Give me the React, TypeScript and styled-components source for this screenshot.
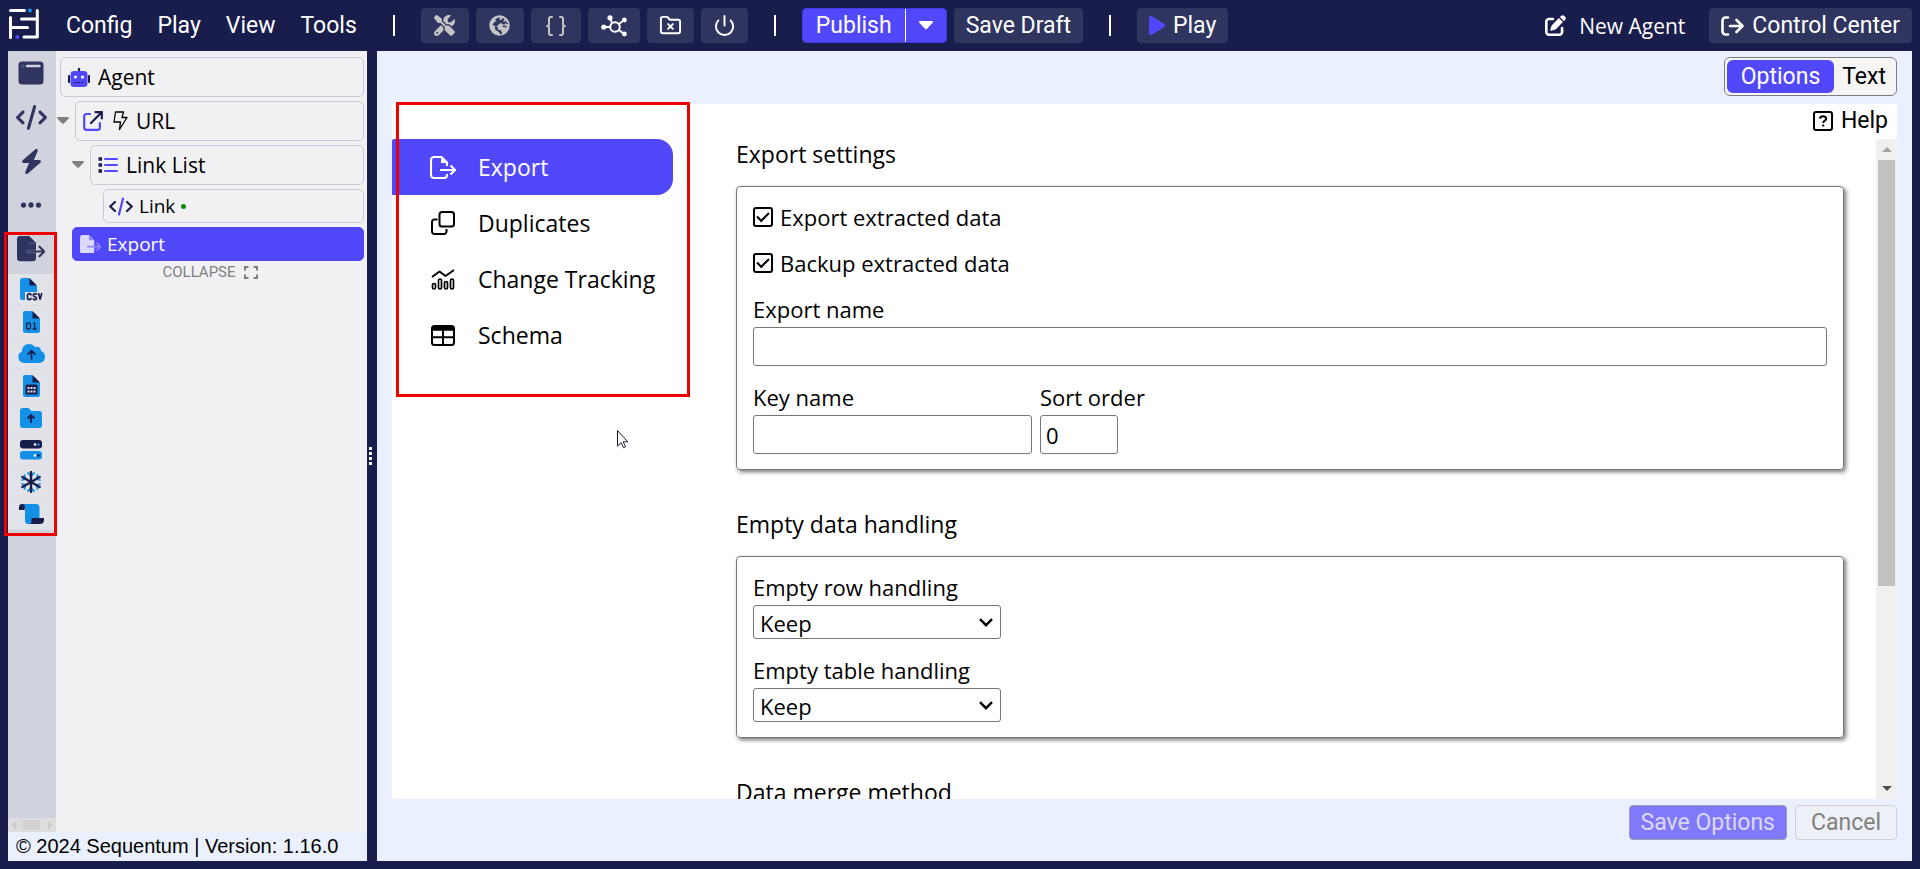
import React, { useState } from "react";
import styled, { createGlobalStyle, css } from "styled-components";
import { FaScrewdriverWrench, FaCode, FaBolt, FaEllipsis, FaPenToSquare } from "react-icons/fa6";
import { Braces, FolderX, Power } from "lucide-react";

const color = {
  navy: "#191d4c",
  slate: "#303560",
  purple: "#5248fb",
  sky: "#1490e6",
  pale: "#eaf0fd",
  panel: "#f1f1f4",
  rail: "#d0d3dd",
  line: "#c9cad6",
};
const roboto = `Roboto, "Liberation Sans", sans-serif`;
const openSans = `"Open Sans", "Noto Sans", sans-serif`;

const GlobalStyle = createGlobalStyle`
  * { box-sizing: border-box; }
  body { margin: 0; background: ${color.navy}; color: #000; font: 22px/30px ${openSans}; }
  button, input, select { font: inherit; color: inherit; margin: 0; }
  svg { display: block; flex: none; }
`;

const Page = styled.div`
  position: relative;
  display: flex;
  flex-direction: column;
  height: 100vh;
  min-height: 640px;
  padding: 0 8px 8px;
`;

/* ---------- top bar ---------- */
const TopBar = styled.header`
  display: flex;
  align-items: center;
  height: 51px;
  flex: none;
  color: #fff;
  font: 23px/32px ${roboto};
`;
const Home = styled.a`
  padding-bottom: 4px;
`;
const Menu = styled.nav`
  display: flex;
  gap: 25px;
  margin: 0 10px 0 26px;
`;
const MenuItem = styled.button`
  padding: 0;
  border: 0;
  background: none;
  cursor: pointer;
`;
const Divider = styled.span`
  width: 2px;
  height: 21px;
  margin: 0 26px;
  background: #fff;
`;
const ToolGroup = styled.div`
  display: flex;
  gap: 7px;
`;
const BarButton = styled.button<{ $width?: number; $dim?: boolean }>`
  display: flex;
  align-items: center;
  justify-content: center;
  gap: 8px;
  height: 35px;
  width: ${(p) => (p.$width ? `${p.$width}px` : "auto")};
  padding: 0 ${(p) => (p.$width ? 0 : 12)}px;
  border: 0;
  border-radius: 4px;
  background: ${color.slate};
  color: ${(p) => (p.$dim ? "#c4c4c4" : "#fff")};
  white-space: nowrap;
`;
const Split = styled.div`
  display: flex;
  height: 35px;
  border: 1px solid #4339e0;
  border-radius: 4px;
  overflow: hidden;
`;
const SplitPart = styled.button`
  display: flex;
  align-items: center;
  padding: 0 13px;
  border: 0;
  background: ${color.purple};
  & + & { border-left: 1px solid #fff; }
`;
const BarEnd = styled.div`
  display: flex;
  align-items: center;
  gap: 24px;
  margin-left: auto;
`;
const BarLink = styled.a`
  display: flex;
  align-items: center;
  gap: 13px;
  color: #fff;
  text-decoration: none;
  font: 21px/30px ${openSans};
`;

/* ---------- body ---------- */
const Body = styled.div`
  display: flex;
  flex: 1;
  min-height: 0;
`;
const Sidebar = styled.aside`
  display: flex;
  flex-direction: column;
  width: 359px;
  flex: none;
  background: ${color.panel};
`;
const SidebarMain = styled.div`
  display: flex;
  flex: 1;
  min-height: 0;
`;
const RailColumn = styled.div`
  display: flex;
  flex-direction: column;
  width: 48px;
  background: #dddddf;
`;
const Rail = styled.nav`
  display: flex;
  flex-direction: column;
  gap: 3px;
  flex: 1;
  background: ${color.rail};
  border-bottom-right-radius: 3px;
`;
const RailButton = styled.button<{ $sub?: boolean }>`
  display: flex;
  align-items: center;
  justify-content: center;
  width: 46px;
  height: ${(p) => (p.$sub ? 32 : 44)}px;
  padding: 0;
  border: 0;
  border-bottom: ${(p) => (p.$sub ? "1px solid #dcdde4" : "0")};
  background: ${(p) => (p.$sub ? "#e2e3e9" : "none")};
  color: ${color.slate};
`;
const RailScroll = styled.div`
  display: flex;
  align-items: center;
  justify-content: space-around;
  height: 14px;
`;
const RailThumb = styled.span`
  width: 17px;
  height: 10px;
  background: #d2d2d3;
`;
const Tree = styled.ul`
  flex: 1;
  display: flex;
  flex-direction: column;
  gap: 4px;
  margin: 0;
  padding: 6px 3px 0 0;
  list-style: none;
`;
const TreeRow = styled.li<{ $indent: number }>`
  display: flex;
  align-items: center;
  padding-left: ${(p) => p.$indent}px;
`;
const Twisty = styled.button`
  display: flex;
  align-items: center;
  width: 18px;
  height: 18px;
  padding: 0;
  border: 0;
  background: none;
  color: #808080;
`;
const Node = styled.button<{ $small?: boolean; $selected?: boolean }>`
  display: flex;
  align-items: center;
  gap: ${(p) => (p.$small ? 6 : 8)}px;
  flex: 1;
  height: ${(p) => (p.$small ? 34 : 40)}px;
  padding: 0 ${(p) => (p.$small ? 5 : 7)}px;
  border: 1px solid ${color.line};
  border-radius: 5px;
  background: none;
  font-size: ${(p) => (p.$small ? 19 : 21)}px;
  line-height: 28px;
  ${(p) =>
    p.$selected &&
    css`
      padding: 0 7px;
      border-color: ${color.purple};
      background: ${color.purple};
      color: #fff;
    `}
`;
const NodeIcons = styled.span`
  display: flex;
  align-items: center;
  gap: 10px;
`;
const Dot = styled.span`
  width: 5px;
  height: 5px;
  border-radius: 50%;
  background: #0a8a0a;
`;
const Collapse = styled.button`
  display: flex;
  align-items: center;
  gap: 8px;
  align-self: center;
  padding: 0;
  border: 0;
  background: none;
  color: #808080;
  font: 15px/14px ${roboto};
`;
const Version = styled.footer`
  height: 29px;
  padding-left: 8px;
  background: ${color.pale};
  font: 20px/28px "Liberation Sans", Arial, sans-serif;
  white-space: nowrap;
`;
const Splitter = styled.div`
  display: flex;
  flex-direction: column;
  justify-content: center;
  align-items: flex-start;
  gap: 2px;
  width: 10px;
  flex: none;
  padding-left: 2px;
`;
const Grip = styled.span`
  width: 3px;
  height: 3px;
  background: #fff;
`;

const Workspace = styled.main`
  display: flex;
  flex-direction: column;
  flex: 1;
  min-width: 0;
  padding: 0 15px;
  background: ${color.pale};
`;
const ModeRow = styled.div`
  display: flex;
  justify-content: flex-end;
  padding: 6px 0 8px;
`;
const ModeToggle = styled.div`
  display: flex;
  height: 39px;
  padding: 2px;
  border: 1px solid #7c7c80;
  border-radius: 6px;
  background: #f5f5f5;
`;
const ModeButton = styled.button<{ $active: boolean }>`
  padding: 0 ${(p) => (p.$active ? 14 : 8)}px;
  border: 0;
  border-radius: 6px;
  background: ${(p) => (p.$active ? color.purple : "none")};
  color: ${(p) => (p.$active ? "#fff" : "#000")};
  font: 23px/32px ${roboto};
`;
const Panel = styled.section`
  display: flex;
  flex-direction: column;
  flex: 1;
  min-height: 0;
  background: #fff;
  border-radius: 0 0 3px 3px;
`;
const HelpRow = styled.div`
  display: flex;
  justify-content: flex-end;
  padding: 1px 9px 2px;
`;
const HelpLink = styled.a`
  display: flex;
  align-items: center;
  gap: 8px;
  color: #000;
  text-decoration: none;
  font: 23px/32px ${roboto};
`;
const PanelBody = styled.div`
  display: flex;
  flex: 1;
  min-height: 0;
`;
const SideNav = styled.nav`
  width: 281px;
  flex: none;
`;
const SideLink = styled.a<{ $active?: boolean }>`
  display: grid;
  grid-template-columns: 26px 1fr;
  column-gap: 22px;
  align-items: center;
  height: 56px;
  padding-left: 38px;
  border-radius: 2px 16px 16px 0;
  background: ${(p) => (p.$active ? color.purple : "none")};
  color: ${(p) => (p.$active ? "#fff" : "#000")};
  text-decoration: none;
  font-size: 23px;
  & > svg { justify-self: center; }
`;
const Form = styled.form`
  flex: 1;
  min-width: 0;
  padding: 0 32px 0 63px;
  overflow: hidden;
`;
const Section = styled.section`
  & + & { margin-top: 39px; }
`;
const Heading = styled.h2`
  margin: 0 0 17px;
  font-size: 23px;
  font-weight: 400;
  line-height: 30px;
`;
const Card = styled.div`
  display: flex;
  flex-direction: column;
  gap: 16px;
  padding: 15px 16px;
  border: 1px solid #777;
  border-radius: 4px;
  box-shadow: 2px 2px 4px #777;
`;
const CheckRow = styled.label`
  display: flex;
  align-items: center;
  gap: 7px;
`;
const CheckBox = styled.input`
  appearance: none;
  display: grid;
  place-items: center;
  width: 20px;
  height: 20px;
  border: 2px solid #000;
  border-radius: 3px;
  &:checked::after {
    content: "";
    width: 10px;
    height: 5px;
    margin-bottom: 3px;
    border: solid #000;
    border-width: 0 0 2px 2px;
    transform: rotate(-45deg);
  }
`;
const Field = styled.label<{ $width?: number }>`
  display: flex;
  flex-direction: column;
  gap: 3px;
  width: ${(p) => (p.$width ? `${p.$width}px` : "auto")};
  white-space: nowrap;
`;
const FieldRow = styled.div`
  display: flex;
  gap: 8px;
`;
const Input = styled.input`
  width: 100%;
  height: 39px;
  padding: 0 5px;
  border: 1px solid #767676;
  border-radius: 3px;
  background: #fff;
`;
const SelectBox = styled.span`
  display: grid;
  align-items: center;
  & > * { grid-area: 1 / 1; }
  & > svg { justify-self: end; margin-right: 8px; pointer-events: none; }
`;
const SelectInput = styled.select`
  appearance: none;
  width: 100%;
  height: 34px;
  padding: 2px 6px 0;
  border: 1px solid #767676;
  border-radius: 3px;
  background: #fff;
`;
const ScrollTrack = styled.div`
  display: flex;
  flex-direction: column;
  align-items: center;
  width: 21px;
  flex: none;
  background: #f0f0f0;
`;
const ScrollArrow = styled.span`
  display: grid;
  place-items: center;
  height: 21px;
`;
const ScrollLane = styled.div`
  flex: 1;
  width: 17px;
`;
const ScrollThumb = styled.div`
  height: 69%;
  background: #c1c1c1;
`;
const Actions = styled.div`
  display: flex;
  justify-content: flex-end;
  gap: 8px;
  padding: 6px 0 21px;
`;
const ActionButton = styled.button<{ $primary?: boolean }>`
  height: 35px;
  padding: 0 ${(p) => (p.$primary ? 11 : 15)}px;
  border: 1px solid ${(p) => (p.$primary ? "#9d9dab" : "#d0d0d4")};
  border-radius: 4px;
  background: ${(p) => (p.$primary ? "#8079fb" : "#edf0f7")};
  color: ${(p) => (p.$primary ? "#dcdaf0" : "#808080")};
  font: 23px/32px ${roboto};
`;
const Outline = styled.div`
  position: absolute;
  border: 3px solid #ee0000;
  pointer-events: none;
`;
const RailOutline = styled(Outline)`
  left: 4px;
  top: 232px;
  width: 53px;
  height: 304px;
`;
const NavOutline = styled(Outline)`
  left: 396px;
  top: 102px;
  width: 294px;
  height: 295px;
`;
const Pointer = styled.svg`
  position: absolute;
  left: 616px;
  top: 429px;
`;

/* ---------- drawings ---------- */
const Logo = () => (
  <svg width="32" height="32" viewBox="0 0 32 32" fill="none" stroke="#fff" strokeWidth="3" strokeLinecap="round" strokeLinejoin="round">
    <path d="M2.500 2.500H16.500M2.500 9.500V29.500M2.500 19.500H19.500M29.300 2.500V29H16M29.300 11H13.500" />
    <circle cx="22" cy="2.500" r="2" fill={color.sky} stroke="none" />
    <circle cx="9.300" cy="29" r="2" fill={color.purple} stroke="none" />
  </svg>
);
const Caret = ({ size = 14 }: { size?: number }) => (
  <svg width={size} height={size * 0.6} viewBox="0 0 14 8.400" fill="currentColor">
    <path d="M1 0h12a1 1 0 0 1 .7 1.700L8 7.700a1.400 1.400 0 0 1-2 0L.3 1.700A1 1 0 0 1 1 0z" />
  </svg>
);
const Chevron = () => (
  <svg width="14" height="9" viewBox="0 0 14 9" fill="none" stroke="#000" strokeWidth="2.400">
    <path d="M1 1.200l6 6 6-6" />
  </svg>
);
const Globe = () => (
  <svg width="21" height="21" viewBox="0 0 21 21">
    <circle cx="10.500" cy="10.500" r="10.200" fill="currentColor" />
    <g fill={color.slate}>
      <path d="M6 4.500L9.500 2.500l2 .3L9.800 4.600l2.200.5 2-2 1.600 1.200L14 6.500l1.200.3 1.500-.8L19 8.500l-1 1-1.500-1.700-.8 1.700H14l-1.600-1.600-2 .9L8 11l-2 .2-2.500-1.700L5.500 7l2-.8z" />
      <path d="M5.500 11.500h3.300v3.200l3 .3 1.500 3.800-1.600.6-2.400-3-2.800-1.500z" />
      <path d="M13.500 10.500l3.500.3 1 2-1.700-.6-2.300-.2z" />
    </g>
  </svg>
);
const Hub = () => (
  <svg width="26" height="22" viewBox="0 0 26 22" fill="none" stroke="#fff" strokeWidth="2">
    <circle cx="14" cy="12" r="4.800" />
    <path d="M11 8L9 3M18 9l5-4M9 12H3M18 15l5 4" />
    <g fill="#fff" stroke="none">
      <circle cx="9" cy="2.800" r="2.600" />
      <circle cx="23.400" cy="5" r="2.400" />
      <circle cx="2.800" cy="12" r="2.600" />
      <circle cx="23.400" cy="19" r="2.400" />
    </g>
  </svg>
);
const PlayMark = () => (
  <svg width="16" height="19" viewBox="0 0 16 19" fill={color.purple}>
    <path d="M0 2a2 2 0 0 1 3-1.700l12 7.500a2 2 0 0 1 0 3.400L3 18.700A2 2 0 0 1 0 17z" />
  </svg>
);
const Exit = () => (
  <svg width="23" height="20" viewBox="0 0 23 20" fill="none" stroke="#fff" strokeWidth="2.600" strokeLinecap="round" strokeLinejoin="round">
    <path d="M7 1.500H4.500a3 3 0 0 0-3 3v11a3 3 0 0 0 3 3H7M9 10h12M15.500 4l6 6-6 6" />
  </svg>
);
const WindowMark = () => (
  <svg width="26" height="24" viewBox="0 0 26 24" fill={color.slate}>
    <rect x="0.500" y="0.500" width="25" height="23" rx="3.500" />
    <circle cx="4.800" cy="5" r="1.300" fill="none" stroke="#5b607f" />
    <path d="M9 5h12.500" stroke={color.rail} strokeWidth="2.400" strokeLinecap="round" />
  </svg>
);
const ExportSolid = ({ width = 28, page, arrow, cut }: { width?: number; page: string; arrow: string; cut?: string }) => (
  <svg width={width} height={width * 0.9} viewBox="0 0 28 25.200" fill="none">
    <path d="M3.200 0H12l7 7v15a3.200 3.200 0 0 1-3.200 3.200H3.200A3.200 3.200 0 0 1 0 22V3.200A3.200 3.200 0 0 1 3.200 0z" fill={page} />
    <path d="M12 0l7 7h-7z" fill={arrow} />
    <path d="M10 15.500h17M22.500 10.700l4.800 4.800-4.800 4.800" stroke={arrow} strokeWidth="2.200" strokeLinecap="round" />
    {cut && <path d="M19 14.300h-9v2.400h9M12 7.300h6" stroke={cut} strokeWidth="0.800" />}
  </svg>
);
const ExportOutline = () => (
  <svg width="26" height="23" viewBox="0 0 26 23" fill="none" stroke="currentColor" strokeWidth="2.100" strokeLinejoin="round">
    <path d="M17 10V6.500L11.500 1H4a3 3 0 0 0-3 3v15a3 3 0 0 0 3 3h10a3 3 0 0 0 3-3v-1M10 14h14.500M20.500 9.500L25 14l-4.500 4.500" />
    <path d="M11 1v6h6z" fill="currentColor" stroke="none" />
  </svg>
);
const Clone = () => (
  <svg width="24" height="24" viewBox="0 0 24 24" fill="none" stroke="currentColor" strokeWidth="2">
    <rect x="8.500" y="1" width="14.500" height="14.500" rx="2.500" />
    <path d="M6.500 8.500H4A2.500 2.500 0 0 0 1 11v9.500A2.500 2.500 0 0 0 3.500 23H13a2.500 2.500 0 0 0 2.500-2.500V18" />
  </svg>
);
const Trend = () => (
  <svg width="24" height="21" viewBox="0 0 24 21" fill="none" stroke="currentColor" strokeWidth="1.700" strokeLinejoin="round">
    <path d="M1 8L8.500 2.500l6 4.500L23 1" strokeWidth="2" />
    <rect x="1.500" y="14.500" width="3" height="5.500" rx="1.500" />
    <rect x="7.500" y="10" width="3" height="10" rx="1.500" />
    <rect x="13.500" y="12.500" width="3" height="7.500" rx="1.500" />
    <rect x="19.500" y="10" width="3" height="10" rx="1.500" />
  </svg>
);
const TableMark = () => (
  <svg width="24" height="21" viewBox="0 0 24 21" fill="none" stroke="currentColor" strokeWidth="2">
    <rect x="1" y="1" width="22" height="19" rx="2.500" />
    <path d="M1 3.500h22" strokeWidth="4.500" />
    <path d="M1 12.300h22M12 4v16" />
  </svg>
);
const HelpMark = () => (
  <svg width="20" height="20" viewBox="0 0 20 20" fill="none" stroke="#000" strokeWidth="2">
    <rect x="1" y="1" width="18" height="18" rx="2" />
    <path d="M7 7.700c0-1.500 1-2.500 3-2.500s3.200 1 3.200 2.500c0 2-3 1.800-3 4.300M10.200 13.500v2" />
  </svg>
);
const Robot = () => (
  <svg width="22" height="19" viewBox="0 0 22 19">
    <path d="M11 0v4M1 8v6M21 8v6" stroke={color.navy} strokeWidth="2.200" strokeLinecap="round" />
    <rect x="2.500" y="3" width="17" height="16" rx="3.500" fill={color.purple} />
    <g fill="#fff">
      <circle cx="7.500" cy="9" r="1.600" />
      <circle cx="14.500" cy="9" r="1.600" />
    </g>
    <path d="M6.500 14.500h2M10 14.500h2M13.500 14.500h2" stroke={color.navy} strokeWidth="1.200" />
  </svg>
);
const OpenLink = () => (
  <svg width="20" height="20" viewBox="0 0 20 20" fill="none" strokeWidth="2.200" strokeLinecap="round">
    <path d="M7 3H3.500A2.400 2.400 0 0 0 1.200 5.400v11A2.400 2.400 0 0 0 3.500 18.800h11a2.400 2.400 0 0 0 2.400-2.400V12" stroke={color.purple} />
    <path d="M8 12L18.500 1.500M12.500 1.200h6.300v6.300" stroke={color.navy} />
  </svg>
);
const BoltLine = () => (
  <svg width="15" height="20" viewBox="0 0 15 20" fill="none" stroke="#000" strokeWidth="1.300" strokeLinejoin="round">
    <path d="M2.500 1h8L9 6.500h5L6.500 18.500l1-7.500H1z" />
  </svg>
);
const ListMark = () => (
  <svg width="20" height="16" viewBox="0 0 20 16" strokeWidth="2">
    <path d="M7 2h12M7 8h12M7 14h12" stroke={color.purple} strokeLinecap="round" />
    <path d="M.5 2H4M.5 8H4M.5 14H4" stroke={color.navy} strokeWidth="3.500" />
  </svg>
);
const CodeMark = () => (
  <svg width="24" height="19" viewBox="0 0 24 19" fill="none" strokeWidth="2.200" strokeLinecap="round" strokeLinejoin="round">
    <path d="M6 5L1.200 9.500 6 14M18 5l4.800 4.500L18 14" stroke={color.navy} />
    <path d="M14 1.500l-4 16" stroke={color.purple} />
  </svg>
);
const Corners = () => (
  <svg width="14" height="13" viewBox="0 0 14 13" fill="none" stroke="#808080" strokeWidth="2">
    <path d="M1 4.500V1h3.500M9.500 1H13v3.500M13 8.500V12H9.500M4.500 12H1V8.500" />
  </svg>
);
const FilePage = () => (
  <>
    <path d="M2.500 0H9l8 8v11.500a2.500 2.500 0 0 1-2.500 2.500h-12A2.500 2.500 0 0 1 0 19.500v-17A2.500 2.500 0 0 1 2.500 0z" fill={color.sky} stroke="none" />
    <path d="M9.500 0L17 7.500H9.500z" fill={color.navy} stroke="none" />
  </>
);
const CsvMark = () => (
  <svg width="23" height="23" viewBox="0 0 23 23" fill="none" stroke={color.navy} strokeWidth="1.700">
    <FilePage />
    <path d="M5 14h18v9H5z" fill="#e2e3e9" stroke="none" />
    <path d="M11 17.500c0-2.500-3.500-2.500-3.500 0v2.300c0 2.500 3.500 2.500 3.500 0M16.500 17c0-2-3.300-1.800-3.300.2 0 1.800 3.300 1.200 3.300 3 0 2-3.300 1.900-3.300 0M18.500 15l1.600 6.500L21.800 15" />
  </svg>
);
const BinaryMark = () => (
  <svg width="17" height="22" viewBox="0 0 17 22" fill="none" stroke={color.navy} strokeWidth="1.300">
    <FilePage />
    <rect x="3.500" y="12" width="4" height="6" rx="1.500" />
    <path d="M10 12.500l1.700-.5v6M9.800 18h3.700" />
  </svg>
);
const CloudMark = () => (
  <svg width="27" height="19" viewBox="0 0 27 19" fill="none">
    <path d="M6 19a6 6 0 0 1-2-11.500C3.800 3 7 0 11 0c3 0 5 1.300 6.200 3.300C20 2 23 3.500 23 7c2.500.5 4 3 4 5.800 0 3.500-2.500 6.200-6 6.200z" fill={color.sky} />
    <path d="M13.500 15.500V7M9.500 10.700l4-4 4 4" stroke={color.navy} strokeWidth="1.800" />
  </svg>
);
const GridFileMark = () => (
  <svg width="17" height="22" viewBox="0 0 17 22" fill="none">
    <FilePage />
    <rect x="2.500" y="9.500" width="12" height="10" rx="1.500" fill={color.navy} />
    <path d="M4.500 13h2M7.500 13h2M10.500 13h2M4.500 16.500h2M7.500 16.500h2M10.500 16.500h2" stroke="#e2e3e9" strokeWidth="2" />
  </svg>
);
const FolderUpMark = () => (
  <svg width="22" height="20" viewBox="0 0 22 20" fill="none">
    <path d="M3 0h5.500l3 3H19a3 3 0 0 1 3 3v11a3 3 0 0 1-3 3H3a3 3 0 0 1-3-3V3a3 3 0 0 1 3-3z" fill={color.sky} />
    <path d="M11 15V7M7.500 10.500L11 7l3.500 3.500" stroke={color.navy} strokeWidth="1.800" />
  </svg>
);
const ServerMark = () => (
  <svg width="22" height="20" viewBox="0 0 22 20">
    <rect width="22" height="8.500" rx="3" fill={color.navy} />
    <rect y="11" width="22" height="8.500" rx="3" fill={color.sky} />
    <circle cx="15" cy="4.500" r="1.300" fill="#fff" />
    <circle cx="18.500" cy="4.500" r="1.300" fill={color.sky} />
    <circle cx="15" cy="15.500" r="1.300" fill="#fff" />
    <circle cx="18.500" cy="15.500" r="1.300" fill={color.navy} />
  </svg>
);
const SnowMark = () => (
  <svg width="20" height="22" viewBox="0 0 20 22" fill="none" strokeLinecap="round">
    <path d="M7 2l3 3 3-3M7 20l3-3 3 3M1 9l3.500-1L3.500 4M19 9l-3.500-1 1-4M1 13l3.500 1-1 4M19 13l-3.500 1 1 4" stroke={color.sky} strokeWidth="1.800" />
    <path d="M10 1v20M1.300 6l17.400 10M1.300 16L18.700 6" stroke={color.navy} strokeWidth="2.400" />
  </svg>
);
const ScrollMark = () => (
  <svg width="25" height="20" viewBox="0 0 25 20">
    <path d="M3 0h14a3.500 3.500 0 0 1 3.500 3.500V14H13v2.500A3.200 3.200 0 0 1 6 16.500V4z" fill={color.sky} />
    <path d="M3 0a2.800 2.800 0 0 1 2.800 3v3H0V3a3 3 0 0 1 3-3zM12.500 14H25v2a4 4 0 0 1-4 4H9.500a3.300 3.300 0 0 0 3-3.500z" fill={color.navy} />
  </svg>
);

const railMain = [
  { name: "Browser", icon: <WindowMark /> },
  { name: "Code", icon: <FaCode size={31} /> },
  { name: "Actions", icon: <FaBolt size={25} /> },
  { name: "More", icon: <FaEllipsis size={24} /> },
  { name: "Export", icon: <ExportSolid page={color.slate} arrow={color.slate} cut="#6a6f8c" /> },
];
const railTargets = [
  { name: "CSV", icon: <CsvMark /> },
  { name: "Binary file", icon: <BinaryMark /> },
  { name: "Cloud upload", icon: <CloudMark /> },
  { name: "Spreadsheet", icon: <GridFileMark /> },
  { name: "Folder upload", icon: <FolderUpMark /> },
  { name: "Database", icon: <ServerMark /> },
  { name: "Snowflake", icon: <SnowMark /> },
  { name: "Script", icon: <ScrollMark /> },
];
const tools = [
  { name: "Tools", width: 48, dim: true, icon: <FaScrewdriverWrench size={21} /> },
  { name: "Web", width: 48, dim: true, icon: <Globe /> },
  { name: "Code", width: 50, dim: true, icon: <Braces size={24} strokeWidth={2} /> },
  { name: "Network", width: 52, dim: false, icon: <Hub /> },
  { name: "Clear folder", width: 47, dim: false, icon: <FolderX size={23} strokeWidth={2} /> },
  { name: "Power", width: 47, dim: false, icon: <Power size={23} strokeWidth={2} /> },
];
const pages = [
  { name: "Export", icon: <ExportOutline /> },
  { name: "Duplicates", icon: <Clone /> },
  { name: "Change Tracking", icon: <Trend /> },
  { name: "Schema", icon: <TableMark /> },
];

const HandlingSelect = ({ label }: { label: string }) => (
  <Field $width={248}>
    {label}
    <SelectBox>
      <SelectInput>
        <option>Keep</option>
        <option>Remove</option>
      </SelectInput>
      <Chevron />
    </SelectBox>
  </Field>
);

export default function App() {
  const [mode, setMode] = useState("Options");
  const [page, setPage] = useState("Export");
  return (
    <Page>
      <GlobalStyle />
      <TopBar>
        <Home href="#home" aria-label="Home"><Logo /></Home>
        <Menu>
          {["Config", "Play", "View", "Tools"].map((m) => (
            <MenuItem key={m}>{m}</MenuItem>
          ))}
        </Menu>
        <Divider />
        <ToolGroup>
          {tools.map((t) => (
            <BarButton key={t.name} aria-label={t.name} $width={t.width} $dim={t.dim}>
              {t.icon}
            </BarButton>
          ))}
        </ToolGroup>
        <Divider />
        <ToolGroup>
          <Split>
            <SplitPart>Publish</SplitPart>
            <SplitPart aria-label="Publish options"><Caret /></SplitPart>
          </Split>
          <BarButton>Save Draft</BarButton>
        </ToolGroup>
        <Divider />
        <BarButton><PlayMark />Play</BarButton>
        <BarEnd>
          <BarLink href="#new"><FaPenToSquare size={21} />New Agent</BarLink>
          <BarButton><Exit />Control Center</BarButton>
        </BarEnd>
      </TopBar>

      <Body>
        <Sidebar>
          <SidebarMain>
            <RailColumn>
              <Rail>
                <div>
                  {railMain.map((r) => (
                    <RailButton key={r.name} aria-label={r.name}>{r.icon}</RailButton>
                  ))}
                </div>
                <div>
                  {railTargets.map((r) => (
                    <RailButton key={r.name} aria-label={r.name} $sub>{r.icon}</RailButton>
                  ))}
                </div>
              </Rail>
              <RailScroll>
                <svg width="4" height="8" viewBox="0 0 4 8" fill="#cbcbcc"><path d="M4 0v8L0 4z" /></svg>
                <RailThumb />
                <svg width="4" height="8" viewBox="0 0 4 8" fill="#cbcbcc"><path d="M0 0v8l4-4z" /></svg>
              </RailScroll>
            </RailColumn>
            <Tree>
              <TreeRow $indent={4}>
                <Node><Robot />Agent</Node>
              </TreeRow>
              <TreeRow $indent={1}>
                <Twisty aria-label="Toggle URL"><Caret size={12} /></Twisty>
                <Node><NodeIcons><OpenLink /><BoltLine /></NodeIcons>URL</Node>
              </TreeRow>
              <TreeRow $indent={16}>
                <Twisty aria-label="Toggle Link List"><Caret size={12} /></Twisty>
                <Node><ListMark />Link List</Node>
              </TreeRow>
              <TreeRow $indent={47}>
                <Node $small><CodeMark />Link<Dot /></Node>
              </TreeRow>
              <TreeRow $indent={16}>
                <Node $small $selected>
                  <ExportSolid width={21} page="#dcd9fe" arrow="#8e87fc" />Export
                </Node>
              </TreeRow>
              <Collapse>COLLAPSE <Corners /></Collapse>
            </Tree>
          </SidebarMain>
          <Version>© 2024 Sequentum | Version: 1.16.0</Version>
        </Sidebar>

        <Splitter>
          <Grip /><Grip /><Grip /><Grip />
        </Splitter>

        <Workspace>
          <ModeRow>
            <ModeToggle>
              {["Options", "Text"].map((m) => (
                <ModeButton key={m} $active={m === mode} onClick={() => setMode(m)}>{m}</ModeButton>
              ))}
            </ModeToggle>
          </ModeRow>
          <Panel>
            <HelpRow>
              <HelpLink href="#help"><HelpMark />Help</HelpLink>
            </HelpRow>
            <PanelBody>
              <SideNav>
                {pages.map((p) => (
                  <SideLink key={p.name} href="#page" $active={p.name === page} onClick={() => setPage(p.name)}>
                    {p.icon}
                    {p.name}
                  </SideLink>
                ))}
              </SideNav>
              <Form>
                <Section>
                  <Heading>Export settings</Heading>
                  <Card>
                    <CheckRow><CheckBox type="checkbox" defaultChecked />Export extracted data</CheckRow>
                    <CheckRow><CheckBox type="checkbox" defaultChecked />Backup extracted data</CheckRow>
                    <Field>Export name<Input type="text" /></Field>
                    <FieldRow>
                      <Field $width={279}>Key name<Input type="text" /></Field>
                      <Field $width={78}>Sort order<Input type="text" defaultValue="0" /></Field>
                    </FieldRow>
                  </Card>
                </Section>
                <Section>
                  <Heading>Empty data handling</Heading>
                  <Card>
                    <HandlingSelect label="Empty row handling" />
                    <HandlingSelect label="Empty table handling" />
                  </Card>
                </Section>
                <Section>
                  <Heading>Data merge method</Heading>
                </Section>
              </Form>
              <ScrollTrack aria-hidden="true">
                <ScrollArrow><svg width="10" height="5" viewBox="0 0 10 5" fill="#a3a3a3"><path d="M0 5l5-5 5 5z" /></svg></ScrollArrow>
                <ScrollLane><ScrollThumb /></ScrollLane>
                <ScrollArrow><svg width="10" height="5" viewBox="0 0 10 5" fill="#505050"><path d="M0 0l5 5 5-5z" /></svg></ScrollArrow>
              </ScrollTrack>
            </PanelBody>
          </Panel>
          <Actions>
            <ActionButton $primary disabled>Save Options</ActionButton>
            <ActionButton disabled>Cancel</ActionButton>
          </Actions>
        </Workspace>
      </Body>

      <RailOutline />
      <NavOutline />
      <Pointer width="13" height="20" viewBox="0 0 13 20" fill="#fff" stroke="#1d1d2b">
        <path d="M1.500 1.500v15.500l3.600-3.300 2.500 5 2-1-2.400-4.900h4.600z" />
      </Pointer>
    </Page>
  );
}
